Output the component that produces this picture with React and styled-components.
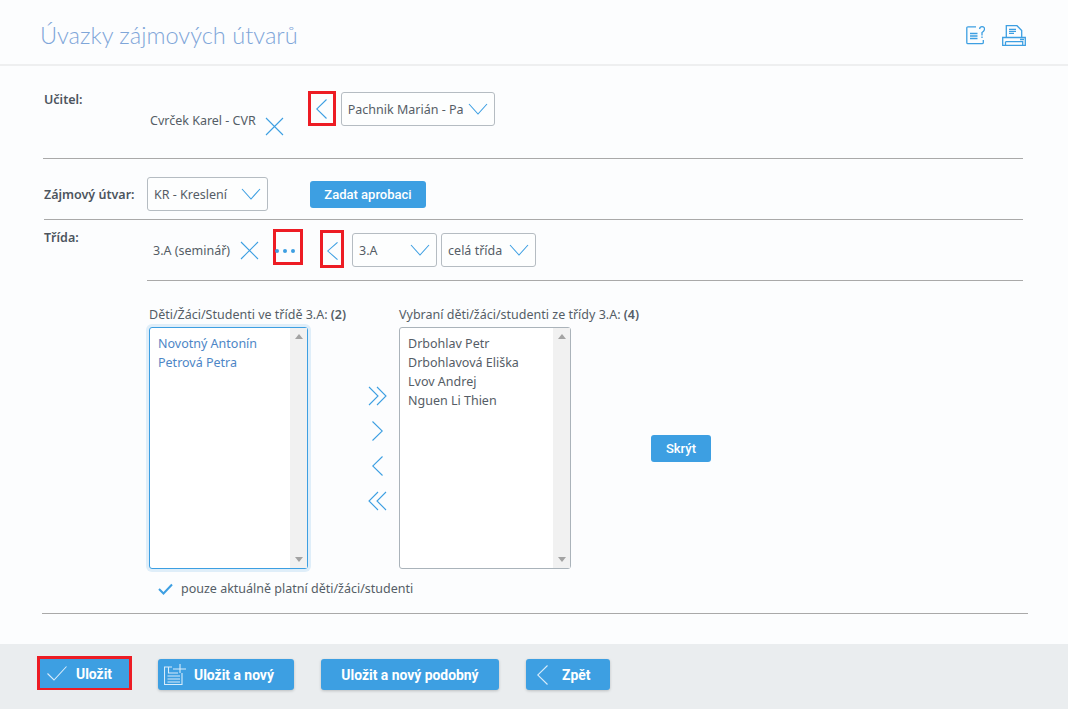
import React from 'react';
import styled, { createGlobalStyle } from 'styled-components';

const BLUE = '#3d9fe2';

const GlobalStyle = createGlobalStyle`
  html, body {
    margin: 0;
    padding: 0;
    background: #fcfdfe;
  }
  body {
    font-family: 'Noto Sans', 'Liberation Sans', sans-serif;
    font-size: 12.5px;
    color: #555d66;
  }
`;

function Chevron({ dir = 'left', w = 11, h = 20, light }) {
  const d = dir === 'left' ? 'M10.5 0.5 L0.7 10 L10.5 19.5' : 'M0.5 0.5 L10.3 10 L0.5 19.5';
  return (
    <Line $light={light} width={w} height={h} viewBox="0 0 11 20" preserveAspectRatio="none">
      <path d={d} />
    </Line>
  );
}

function DoubleChevron({ dir = 'right' }) {
  const d =
    dir === 'right'
      ? 'M1 1 L10 10 L1 19 M9 1 L18 10 L9 19'
      : 'M18 1 L9 10 L18 19 M10 1 L1 10 L10 19';
  return (
    <Line width="19" height="20" viewBox="0 0 19 20">
      <path d={d} />
    </Line>
  );
}

function Cross() {
  return (
    <Line width="19" height="19" viewBox="0 0 19 19">
      <path d="M1 1 L18 18 M18 1 L1 18" />
    </Line>
  );
}

function Select({ width, mt, children }) {
  return (
    <SelectBox $width={width} $mt={mt}>
      <span>{children}</span>
      <Line width="20" height="12" viewBox="0 0 20 12">
        <path d="M1 1 L10 11 L19 1" />
      </Line>
    </SelectBox>
  );
}

export default function App() {
  return (
    <Page>
      <GlobalStyle />
      <Header>
        <Title>Úvazky zájmových útvarů</Title>
        <HeaderIcons>
          <HeaderIcon width="19" height="19" viewBox="0 0 19 19">
            <path d="M10 0.8 H2 Q0.8 0.8 0.8 2 V16.5 Q0.8 17.7 2 17.7 H16 Q17.3 17.7 17.3 16.5 V14" />
            <path d="M4 7.5 H11.5 M4 10 H11.5 M4 12.5 H11.5" />
            <path d="M13.5 3 Q14 0.7 16 0.7 Q18.7 0.7 18.5 3.5 Q18 5.5 16 6.5 V9.5 M16 10.5 V12" />
          </HeaderIcon>
          <HeaderIcon width="24" height="21" viewBox="0 0 24 21">
            <path d="M4.3 12 V0.7 H15 L19.7 5.5 V12" />
            <path d="M7 4.3 H14 M7 6.3 H14 M7 8.3 H12" />
            <path d="M0.7 12.5 H23.3 V20.4 H0.7 Z M3.5 16.7 H20.7 V20.4 M3.5 16.7 V20.4 M18 14.5 H22" />
          </HeaderIcon>
        </HeaderIcons>
      </Header>

      <Content>
        <TeacherRow>
          <Label>Učitel:</Label>
          <SelectedTeacher>
            <span>Cvrček Karel - CVR</span>
            <Cross />
          </SelectedTeacher>
          <Marked $width={28} $height={35} $ml={24} $mr={5}>
            <Chevron />
          </Marked>
          <Select width={154} mt={1}>Pachnik Marián - Pa</Select>
        </TeacherRow>

        <ActivityRow>
          <Label>Zájmový útvar:</Label>
          <Select width={121}>KR - Kreslení</Select>
          <SmallButton $ml={38}>Zadat aprobaci</SmallButton>
        </ActivityRow>

        <ClassRow>
          <Label>Třída:</Label>
          <ClassBody>
            <ClassControls>
              <ClassName>3.A (seminář)</ClassName>
              <Cross />
              <Marked $width={30} $height={36} $ml={14} $mr={6} $mb={6}>
                <Dots><i /><i /><i /></Dots>
              </Marked>
              <Marked $width={24} $height={38} $ml={11} $mr={8} $mb={2} $pt={4}>
                <Chevron h={18} />
              </Marked>
              <Select width={85}>3.A</Select>
              <Select width={95}>celá třída</Select>
            </ClassControls>
          </ClassBody>
        </ClassRow>

        <Lists>
          <ListColumn $width={159}>
            <ListTitle>Děti/Žáci/Studenti ve třídě 3.A: <b>(2)</b></ListTitle>
            <ListBox $focused>
              <Items $blue>
                <div>Novotný Antonín</div>
                <div>Petrová Petra</div>
              </Items>
              <Track><Up /><Down /></Track>
            </ListBox>
          </ListColumn>
          <Arrows>
            <DoubleChevron dir="right" />
            <Chevron dir="right" />
            <Chevron dir="left" />
            <DoubleChevron dir="left" />
          </Arrows>
          <ListColumn $width={172}>
            <ListTitle>Vybraní děti/žáci/studenti ze třídy 3.A: <b>(4)</b></ListTitle>
            <ListBox>
              <Items>
                <div>Drbohlav Petr</div>
                <div>Drbohlavová Eliška</div>
                <div>Lvov Andrej</div>
                <div>Nguen Li Thien</div>
              </Items>
              <Track><Up /><Down /></Track>
            </ListBox>
          </ListColumn>
          <SmallButton $ml={80} $mt={22} $width={60}>Skrýt</SmallButton>
        </Lists>

        <CheckRow>
          <svg width="15" height="12" viewBox="0 0 15 12" fill="none" stroke={BLUE} strokeWidth="2">
            <path d="M1 6 L5.5 10.5 L14 1.5" />
          </svg>
          <span>pouze aktuálně platní děti/žáci/studenti</span>
        </CheckRow>
      </Content>

      <Footer>
        <SaveOutline>
          <FooterButton $width={89} $height={29} $pl={7} $square>
            <Line $light width="20" height="15" viewBox="0 0 20 15">
              <path d="M0.5 7.5 L7 14 L19.5 0.5" />
            </Line>
            <ButtonLabel $ml={9}>Uložit</ButtonLabel>
          </FooterButton>
        </SaveOutline>
        <FooterButton $width={136} $ml={26} $pl={6}>
          <Line $light width="22" height="21" viewBox="0 0 22 21">
            <path d="M8 3 H0.5 V20.5 H18 V9 M4.5 3 V9 H14 M16 0 V9 M9 5 H22 M3.5 12 H16 M3.5 15 H16 M3.5 18 H16" />
          </Line>
          <ButtonLabel $ml={8}>Uložit a nový</ButtonLabel>
        </FooterButton>
        <FooterButton $width={178} $ml={27} $center>Uložit a nový podobný</FooterButton>
        <FooterButton $width={84} $ml={27} $pl={11}>
          <Chevron light />
          <ButtonLabel $ml={14}>Zpět</ButtonLabel>
        </FooterButton>
      </Footer>
    </Page>
  );
}

const Page = styled.div`
  display: flex;
  flex-direction: column;
  width: 1068px;
  height: 709px;
  overflow: hidden;
  background: #fcfdfe;
`;

const Line = styled.svg`
  flex: none;
  fill: none;
  stroke: ${(p) => (p.$light ? '#d8ecfa' : BLUE)};
  stroke-width: 1.1;
`;

const Header = styled.header`
  display: flex;
  flex: none;
  align-items: center;
  justify-content: space-between;
  box-sizing: border-box;
  height: 66px;
  padding: 0 42px 0 40px;
  border-bottom: 2px solid #eeeff0;
`;

const Title = styled.h1`
  margin: 6px 0 0;
  font-family: 'Lato', sans-serif;
  font-size: 23.6px;
  font-weight: 300;
  color: #7fa6d9;
`;

const HeaderIcons = styled.div`
  display: flex;
  align-items: center;
  gap: 17px;
  margin-top: 6px;
`;

const HeaderIcon = styled.svg`
  fill: none;
  stroke: ${BLUE};
  stroke-width: 1.3;
`;

const Content = styled.main`
  flex: 1;
  margin: 0 40px 30px 42px;
  border-bottom: 1px solid #a9a9a9;
`;

const TeacherRow = styled.div`
  display: flex;
  align-items: flex-start;
  box-sizing: border-box;
  height: 93px;
  margin: 0 5px 0 1px;
  padding: 25px 0 0 1px;
  border-bottom: 1px solid #a9a9a9;
`;

const Label = styled.div`
  flex: none;
  width: 103px;
  font-weight: 600;
  color: #4d555e;
`;

const SelectedTeacher = styled.div`
  display: flex;
  align-items: flex-start;
  gap: 9px;
  margin: 21px 0 0 3px;
  svg {
    margin-top: 5px;
  }
`;

const Marked = styled.div`
  display: flex;
  flex: none;
  align-items: center;
  justify-content: center;
  box-sizing: border-box;
  width: ${(p) => p.$width}px;
  height: ${(p) => p.$height}px;
  margin: 0 ${(p) => p.$mr}px ${(p) => p.$mb || 0}px ${(p) => p.$ml}px;
  padding-top: ${(p) => p.$pt || 0}px;
  border: 3px solid #ed1c24;
`;

const SelectBox = styled.div`
  display: flex;
  flex: none;
  align-items: center;
  justify-content: space-between;
  box-sizing: border-box;
  width: ${(p) => p.$width}px;
  height: 34px;
  margin: ${(p) => p.$mt || 0}px 4px 0 0;
  padding: 0 6px;
  border: 1px solid #b5bcc2;
  border-radius: 3px;
  background: #fdfefe;
  white-space: nowrap;
`;

const ActivityRow = styled.div`
  display: flex;
  align-items: center;
  box-sizing: border-box;
  height: 61px;
  margin: 0 5px 0 2px;
  padding-top: 10px;
  border-bottom: 1px solid #a9a9a9;
`;

const SmallButton = styled.button`
  flex: none;
  box-sizing: border-box;
  width: ${(p) => (p.$width ? `${p.$width}px` : '116px')};
  height: 27px;
  margin-left: ${(p) => p.$ml || 0}px;
  margin-top: ${(p) => p.$mt || 0}px;
  padding: 0;
  border: none;
  border-radius: 3px;
  background: ${BLUE};
  color: #fff;
  font-family: 'Roboto', sans-serif;
  font-size: 13px;
  font-weight: 500;
`;

const ClassRow = styled.div`
  display: flex;
  margin: 0 5px 0 2px;
  padding-top: 9px;
`;

const ClassBody = styled.div`
  flex: 1;
  height: 51px;
  border-bottom: 1px solid #a9a9a9;
`;

const ClassControls = styled.div`
  display: flex;
  align-items: center;
  height: 42px;
`;

const ClassName = styled.span`
  margin: 0 10px 0 6px;
`;

const Dots = styled.div`
  display: flex;
  gap: 4px;
  margin: 8px 6px 0 0;
  i {
    width: 4px;
    height: 4px;
    border-radius: 50%;
    background: ${BLUE};
  }
`;

const Lists = styled.div`
  display: flex;
  align-items: center;
  margin: 25px 0 0 107px;
`;

const ListColumn = styled.div`
  flex: none;
  width: ${(p) => p.$width}px;
`;

const ListTitle = styled.div`
  height: 21px;
  white-space: nowrap;
  b {
    font-weight: 600;
  }
`;

const ListBox = styled.div`
  display: flex;
  box-sizing: border-box;
  height: 242px;
  border: 1px solid ${(p) => (p.$focused ? BLUE : '#aab3ba')};
  border-radius: 3px;
  background: #fff;
  box-shadow: ${(p) => (p.$focused ? '0 0 0 3px #dfeef9' : 'none')};
`;

const Items = styled.div`
  flex: 1;
  padding: 6px 0 0 8px;
  line-height: 19px;
  color: ${(p) => (p.$blue ? '#4d86c6' : '#555d66')};
`;

const Track = styled.div`
  display: flex;
  flex: none;
  flex-direction: column;
  align-items: center;
  justify-content: space-between;
  box-sizing: border-box;
  width: 17px;
  padding: 6px 0;
  background: #f1f1f1;
`;

const Up = styled.i`
  border: 4px solid transparent;
  border-top: 0;
  border-bottom: 5px solid #a3a3a3;
`;

const Down = styled.i`
  border: 4px solid transparent;
  border-bottom: 0;
  border-top: 5px solid #a3a3a3;
`;

const Arrows = styled.div`
  display: flex;
  flex: none;
  flex-direction: column;
  align-items: center;
  gap: 15px;
  box-sizing: border-box;
  width: 91px;
  margin-top: 22px;
  padding-left: 47px;
`;

const CheckRow = styled.div`
  display: flex;
  align-items: center;
  gap: 8px;
  height: 19px;
  margin: 10px 0 0 116px;
`;

const Footer = styled.footer`
  display: flex;
  flex: none;
  align-items: center;
  box-sizing: border-box;
  height: 65px;
  padding: 0 0 4px 37px;
  background: #eaedef;
`;

const SaveOutline = styled.div`
  display: flex;
  margin-bottom: 3px;
  border: 3px solid #ed1c24;
  border-bottom-width: 2px;
`;

const FooterButton = styled.button`
  display: flex;
  flex: none;
  align-items: center;
  justify-content: ${(p) => (p.$center ? 'center' : 'flex-start')};
  box-sizing: border-box;
  width: ${(p) => p.$width}px;
  height: ${(p) => p.$height || 31}px;
  margin-left: ${(p) => p.$ml || 0}px;
  padding: 0 0 0 ${(p) => p.$pl || 0}px;
  border: none;
  border-radius: ${(p) => (p.$square ? 0 : 3)}px;
  background: ${BLUE};
  box-shadow: ${(p) => (p.$square ? 'none' : '0 1px 3px rgba(0, 0, 0, 0.2)')};
  color: #fff;
  font-family: 'Roboto', sans-serif;
  font-size: 13.9px;
  font-weight: 700;
`;

const ButtonLabel = styled.span`
  margin-left: ${(p) => p.$ml}px;
`;
